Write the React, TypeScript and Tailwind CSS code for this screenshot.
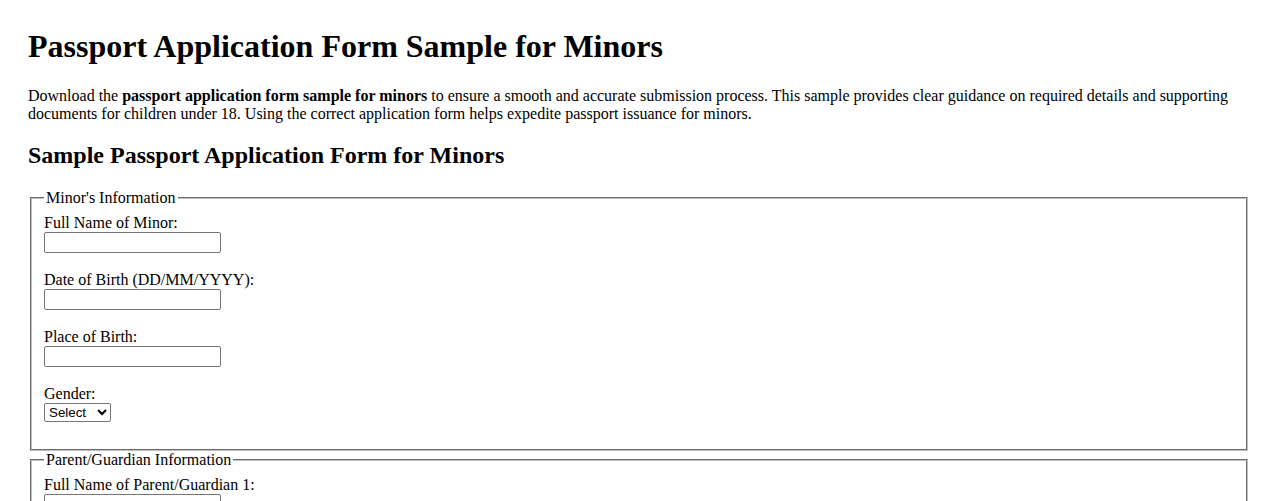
const Field = ({ label }: { label: string }) => (
  <div className="mb-[18px]">
    <label className="block">{label}</label>
    <input
      type="text"
      className="block h-[21px] w-[177px] rounded-[2px] border border-[#767676] bg-white px-[2px] font-['Liberation_Sans',Arial,sans-serif] text-[13.33px]"
    />
  </div>
);

const App = () => {
  return (
    <div className="min-h-screen bg-white px-7 pt-[28px] font-['Liberation_Serif','Times_New_Roman',serif] text-base leading-[normal] text-black">
      <h1 className="mb-[22.4px] text-[32px] font-bold">Passport Application Form Sample for Minors</h1>
      <p className="mb-[16px]">
        Download the <strong>passport application form sample for minors</strong> to ensure a smooth and accurate
        submission process. This sample provides clear guidance on required details and supporting documents for
        children under 18. Using the correct application form helps expedite passport issuance for minors.
      </p>
      <h2 className="mb-[18px] text-2xl font-bold">Sample Passport Application Form for Minors</h2>

      <form>
        {/* Minor section */}
        <fieldset className="mx-[2px] border-2 border-[#c0c0c0] px-3 pt-[6.6px] pb-[10px] [border-style:groove]">
          <legend className="px-[2px]">Minor's Information</legend>
          <Field label="Full Name of Minor:" />
          <Field label="Date of Birth (DD/MM/YYYY):" />
          <Field label="Place of Birth:" />
          <div className="mb-[17.5px]">
            <label className="block">Gender:</label>
            <select className="block h-[19px] w-[67px] rounded-[2px] border border-[#767676] bg-white font-['Liberation_Sans',Arial,sans-serif] text-[13.33px]">
              <option>Select</option>
              <option>Male</option>
              <option>Female</option>
            </select>
          </div>
        </fieldset>

        {/* Parent section */}
        <fieldset className="mx-[2px] border-2 border-[#c0c0c0] px-3 pt-[6.6px] pb-[10px] [border-style:groove]">
          <legend className="px-[2px]">Parent/Guardian Information</legend>
          <Field label="Full Name of Parent/Guardian 1:" />
          <Field label="Relationship to Minor:" />
          <Field label="Contact Number:" />
        </fieldset>
      </form>
    </div>
  );
};

export default App;
